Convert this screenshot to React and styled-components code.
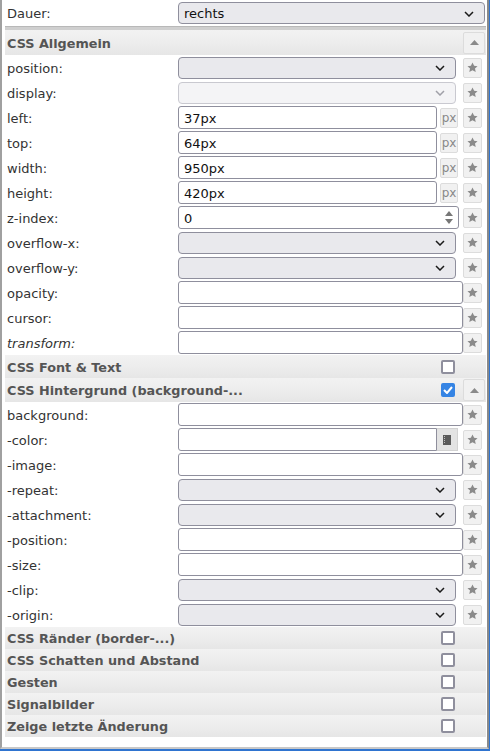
import React from 'react'
import styled, { createGlobalStyle } from 'styled-components'

const Global = createGlobalStyle`
    html, body {
        margin: 0;
        padding: 0;
        background: #2f74d0;
    }
    * { box-sizing: border-box; }
`

const Frame = styled.div`
    width: 489px;
    height: 749px;
    background: #fff;
    border-left: 2px solid #a0a0a0;
    border-right: 2px solid #8a8a8a;
    border-bottom: 2px solid #c8c8c8;
    padding: 0 1px 0 3px;
    font-family: "DejaVu Sans", Verdana, sans-serif;
    font-size: 13px;
    color: #333;
`

const Row = styled.div`
    display: flex;
    align-items: center;
    height: ${p => p.h || 25}px;
`

const Label = styled.div`
    width: 173px;
    padding: 1px 0 0 2px;
    font-style: ${p => (p.italic ? 'italic' : 'normal')};
    white-space: nowrap;
`

const Controls = styled.div`
    flex: 1;
    display: flex;
    align-items: center;
    height: 100%;
`

const Separator = styled.div`
    height: 4px;
    background: #cfcfcf;
    border-top: 1px solid #b8b8b8;
`

const Header = styled.div`
    display: flex;
    align-items: center;
    height: ${p => p.h || 22}px;
    padding-left: 2px;
    background: linear-gradient(#f2f2f2 0%, #ededed 50%, #e6e6e6 100%);
    font-weight: bold;
    font-size: 12.8px;
    color: #555;
    white-space: nowrap;
`

const HeaderText = styled.div`
    flex: 1;
    overflow: hidden;
    padding-top: 1px;
`

const Check = styled.div`
    width: 14px;
    height: 14px;
    border: 2px solid ${p => (p.on ? '#3584e4' : '#8f8f9d')};
    border-radius: 2px;
    background: ${p => (p.on ? '#3584e4' : '#fff')};
    display: flex;
    align-items: center;
    justify-content: center;
    margin-right: 8px;
`

const Spacer = styled.div`
    width: ${p => p.w}px;
    flex: none;
`

const SmallButton = styled.div`
    flex: none;
    width: ${p => p.w || 19}px;
    height: ${p => p.h || 20}px;
    margin-left: ${p => p.ml || 0}px;
    background: #f1f1f1;
    border: 1px solid #dcdcdc;
    border-radius: 2px;
    display: flex;
    align-items: center;
    justify-content: center;
    color: #888;
    font-size: 12px;
    padding-top: ${p => (p.text ? 1 : 0)}px;
`

const Select = styled.div`
    flex: none;
    width: ${p => p.w}px;
    height: 22px;
    border: 1px solid ${p => (p.disabled ? '#c9c9d0' : '#8f8f9d')};
    border-radius: 4px;
    background: ${p => (p.disabled ? '#f4f4f6' : '#e9e9ed')};
    display: flex;
    align-items: center;
    justify-content: space-between;
    padding: 1px 10px 0 5px;
    color: #111;
`

const Input = styled.div`
    flex: none;
    width: ${p => p.w}px;
    height: 23px;
    border: 1px solid #8f8f9d;
    border-radius: ${p => (p.attached ? '3px 0 0 3px' : '3px')};
    background: #fff;
    display: flex;
    align-items: center;
    padding: 2px 0 0 5px;
    color: #111;
    position: relative;
`

const ColorButton = styled.div`
    flex: none;
    width: 21px;
    height: 23px;
    background: #e3e3e3;
    border: 1px solid #d2d2d2;
    border-left: none;
    display: flex;
    align-items: center;
    justify-content: center;
`

const Spin = styled.div`
    position: absolute;
    right: 4px;
    top: 2px;
    bottom: 2px;
    width: 10px;
    display: flex;
    flex-direction: column;
    align-items: center;
    justify-content: space-around;
`

const Star = () => (
    <svg width="11" height="11" viewBox="0 0 10 10">
        <path d="M5 0.4l1.45 3 3.15.35-2.35 2.15.68 3.15L5 7.450 2.07 9.05l.68-3.15L.4 3.75l3.15-.35z" fill="#8a8a8a" />
    </svg>
)

const Chevron = ({ light }) => (
    <svg width="10" height="6" viewBox="0 0 10 6">
        <path d="M1 1l4 4 4-4" fill="none" stroke={light ? '#a0a0a8' : '#1a1a1a'} strokeWidth="1.5" />
    </svg>
)

const UpArrow = () => (
    <svg width="9" height="5" viewBox="0 0 9 5">
        <path d="M0 5L4.5 0 9 5z" fill="#8a8a8a" />
    </svg>
)

const Tick = () => (
    <svg width="10" height="8" viewBox="0 0 10 8">
        <path d="M1 4l3 3 5-6" fill="none" stroke="#fff" strokeWidth="2" />
    </svg>
)

const StarButton = ({ ml }) => (
    <SmallButton ml={ml}>
        <Star />
    </SmallButton>
)

const SelectRow = ({ label, disabled }) => (
    <Row>
        <Label>{label}</Label>
        <Controls>
            <Select w={278} disabled={disabled}>
                <span />
                <Chevron light={disabled} />
            </Select>
            <StarButton ml={7} />
        </Controls>
    </Row>
)

const PxRow = ({ label, value }) => (
    <Row>
        <Label>{label}</Label>
        <Controls>
            <Input w={259}>{value}</Input>
            <SmallButton w={18} ml={3} text>px</SmallButton>
            <StarButton ml={5} />
        </Controls>
    </Row>
)

const TextRow = ({ label, italic }) => (
    <Row>
        <Label italic={italic}>{label}</Label>
        <Controls>
            <Input w={285} />
            <StarButton ml={0} />
        </Controls>
    </Row>
)

const Section = ({ title, checked, hasCheck, hasToggle, h }) => (
    <Header h={h}>
        <HeaderText>{title}</HeaderText>
        {hasCheck ? (
            <Check on={checked}>{checked && <Tick />}</Check>
        ) : null}
        {hasToggle ? (
            <SmallButton w={22} h={22} ml={0}>
                <UpArrow />
            </SmallButton>
        ) : (
            <Spacer w={22} />
        )}
        <Spacer w={1} />
    </Header>
)

const App = () => {
    return (
        <Frame>
            <Global />
            <Row h={26}>
                <Label>Dauer:</Label>
                <Controls>
                    <Select w={307}>
                        <span>rechts</span>
                        <Chevron />
                    </Select>
                </Controls>
            </Row>
            <Separator />
            <Section title="CSS Allgemein" hasToggle h={25} />
            <SelectRow label="position:" />
            <SelectRow label="display:" disabled />
            <PxRow label="left:" value="37px" />
            <PxRow label="top:" value="64px" />
            <PxRow label="width:" value="950px" />
            <PxRow label="height:" value="420px" />
            <Row>
                <Label>z-index:</Label>
                <Controls>
                    <Input w={281}>
                        0
                        <Spin>
                            <svg width="8" height="5" viewBox="0 0 8 5"><path d="M0 5L4 0 8 5z" fill="#777" /></svg>
                            <svg width="8" height="5" viewBox="0 0 8 5"><path d="M0 0L4 5 8 0z" fill="#777" /></svg>
                        </Spin>
                    </Input>
                    <StarButton ml={4} />
                </Controls>
            </Row>
            <SelectRow label="overflow-x:" />
            <SelectRow label="overflow-y:" />
            <TextRow label="opacity:" />
            <TextRow label="cursor:" />
            <TextRow label="transform:" italic />
            <Section title="CSS Font & Text" hasCheck h={23} />
            <Section title="CSS Hintergrund (background-..." hasCheck checked hasToggle h={24} />
            <TextRow label="background:" />
            <Row>
                <Label>-color:</Label>
                <Controls>
                    <Input w={259} attached />
                    <ColorButton>
                        <svg width="8" height="10" viewBox="0 0 8 10">
                            <rect x="0" y="0" width="8" height="10" fill="#5a5a5a" />
                            <path d="M1.5 1v8" stroke="#bdbdbd" strokeWidth="1" strokeDasharray="1 1" />
                        </svg>
                    </ColorButton>
                    <StarButton ml={5} />
                </Controls>
            </Row>
            <TextRow label="-image:" />
            <SelectRow label="-repeat:" />
            <SelectRow label="-attachment:" />
            <TextRow label="-position:" />
            <TextRow label="-size:" />
            <SelectRow label="-clip:" />
            <SelectRow label="-origin:" />
            <Section title="CSS Ränder (border-...)" hasCheck />
            <Section title="CSS Schatten und Abstand" hasCheck />
            <Section title="Gesten" hasCheck />
            <Section title="Signalbilder" hasCheck />
            <Section title="Zeige letzte Änderung" hasCheck />
        </Frame>
    )
}

export default App
